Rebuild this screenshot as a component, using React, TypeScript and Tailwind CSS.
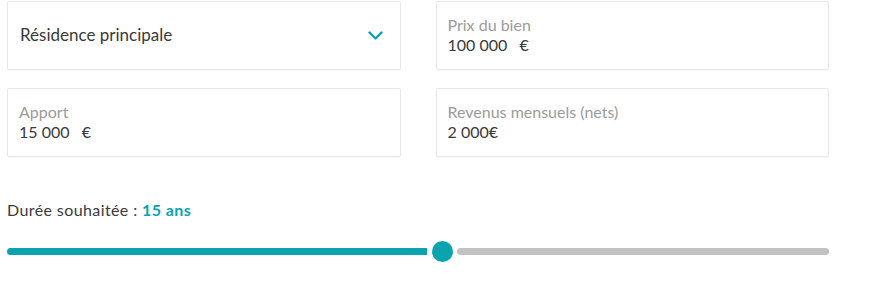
import React, { useState } from 'react';

const font = { fontFamily: 'Lato, "Open Sans", sans-serif' };

interface FieldProps {
  label: string;
  value: string;
}

const Field: React.FC<FieldProps> = ({ label, value }) => (
  <div className="h-[69px] rounded-[2px] border border-[#e8e8e8] bg-white px-[11px] pt-[13px] shadow-[0_1px_1px_rgba(0,0,0,0.03)]">
    <div className="text-[16px] leading-[20px] text-[#9b9b9b]">{label}</div>
    <div className="text-[16px] leading-[20px] text-[#3a3a3a]">{value}</div>
  </div>
);

const App: React.FC = () => {
  const [years] = useState(15);

  return (
    <div className="min-h-[300px] bg-white pl-[7px] pt-[1px]" style={font}>
      <div className="w-[822px]">
        <div className="grid grid-cols-2 gap-x-[35px] gap-y-[18px]">
          <div className="flex h-[69px] items-center justify-between rounded-[2px] border border-[#e8e8e8] bg-white pb-[2px] pl-[12px] pr-[17px] shadow-[0_1px_1px_rgba(0,0,0,0.03)]">
            <span className="text-[17px] text-[#3a3a3a]">Résidence principale</span>
            <svg width="15" height="9" viewBox="0 0 15 9" fill="none" className="mt-[2px]">
              <path d="M1.5 1.5 L7.5 7.5 L13.5 1.5" stroke="#0aa3ae" strokeWidth="2.4" strokeLinecap="round" strokeLinejoin="round" />
            </svg>
          </div>
          <Field label="Prix du bien" value={'100 000\u00a0\u00a0 €'} />
          <Field label="Apport" value={'15 000\u00a0\u00a0 €'} />
          <Field label="Revenus mensuels (nets)" value="2 000€" />
        </div>

        <div className="mt-[43px] text-[16px] leading-[20px] tracking-wide text-[#3a3a3a]">
          Durée souhaitée : <span className="font-bold text-[#0aa3ae]">{years} ans</span>
        </div>

        <div className="mt-[21px] flex h-[21px] items-center">
          <div className="h-[7px] w-[420px] rounded-l-full bg-[#0aa3ae]" />
          <div className="ml-[5px] h-[21px] w-[21px] rounded-full bg-[#0aa3ae]" />
          <div className="ml-[4px] h-[7px] flex-1 rounded-full bg-[#c2c2c2]" />
        </div>
      </div>
    </div>
  );
};

export default App;
